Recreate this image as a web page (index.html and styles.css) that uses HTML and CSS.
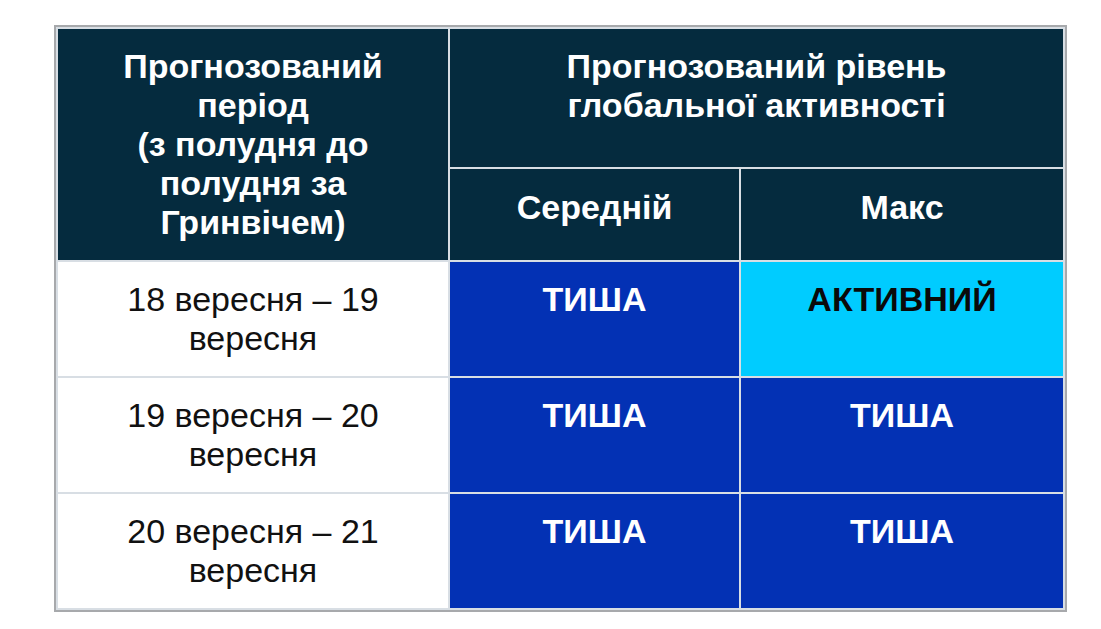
FILE: index.html
```html
<!DOCTYPE html>
<html lang="uk">
<head>
<meta charset="utf-8">
<title>Прогноз</title>
<link rel="stylesheet" href="styles.css">
</head>
<body>
<table class="forecast">
  <colgroup>
    <col class="c1"><col class="c2"><col class="c3">
  </colgroup>
  <tr class="hr1">
    <th class="head" rowspan="2">Прогнозований<br>період<br>(з полудня до<br>полудня за<br>Гринвічем)</th>
    <th class="head" colspan="2">Прогнозований рівень<br>глобальної активності</th>
  </tr>
  <tr class="hr2">
    <th class="head">Середній</th>
    <th class="head">Макс</th>
  </tr>
  <tr class="dr">
    <td class="period">18 вересня – 19<br>вересня</td>
    <td class="quiet">ТИША</td>
    <td class="active">АКТИВНИЙ</td>
  </tr>
  <tr class="dr">
    <td class="period">19 вересня – 20<br>вересня</td>
    <td class="quiet">ТИША</td>
    <td class="quiet">ТИША</td>
  </tr>
  <tr class="dr">
    <td class="period">20 вересня – 21<br>вересня</td>
    <td class="quiet">ТИША</td>
    <td class="quiet">ТИША</td>
  </tr>
</table>
</body>
</html>
```
FILE: styles.css
```css
html, body {
  margin: 0;
  padding: 0;
  background: #ffffff;
}
body {
  font-family: "Liberation Sans", Arial, sans-serif;
}
.forecast {
  margin: 25px 0 0 54px;
  table-layout: fixed;
  width: 1013px;
  border: 2px solid #a7a9ac;
  border-collapse: separate;
  border-spacing: 2px;
  background: #d8dee4;
}
.c1 { width: 390px; }
.c2 { width: 289px; }
.c3 { width: 322px; }
.forecast th, .forecast td {
  font-size: 34px;
  line-height: 39px;
  text-align: center;
  vertical-align: top;
  padding: 18px 6px 0;
}
.hr1 { height: 138px; }
.hr2 { height: 91px; }
.hr2 th { padding-top: 19px; }
.dr { height: 114px; }
.head {
  background: #052b3e;
  color: #ffffff;
  font-weight: bold;
}
.period {
  background: #ffffff;
  color: #111111;
  font-weight: normal;
}
.quiet {
  background: #0331b4;
  color: #ffffff;
  font-weight: bold;
}
.active {
  background: #00ccff;
  color: #0a0a0a;
  font-weight: bold;
}
```
